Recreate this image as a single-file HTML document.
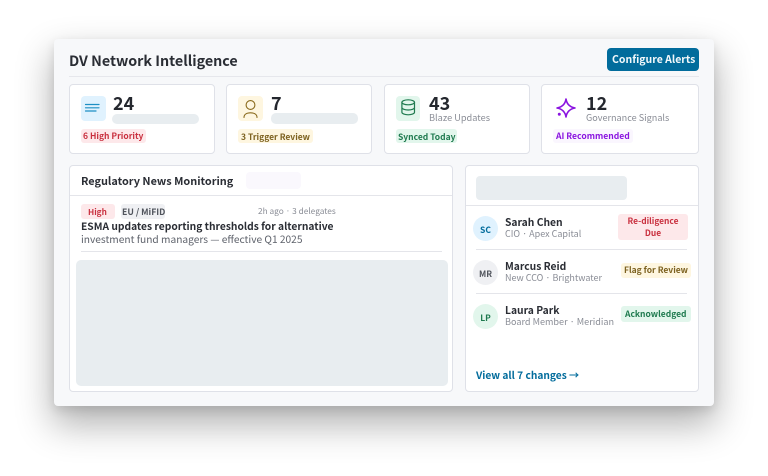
<!DOCTYPE html>
<html><head><meta charset="utf-8"><style>
html,body{margin:0;padding:0;width:768px;height:476px;background:#fff;overflow:hidden}
body{position:relative;font-family:"Noto Sans CJK JP","Liberation Sans",sans-serif;color:#24272e}
div,span.t{position:absolute;box-sizing:border-box}
.t{white-space:nowrap;line-height:1}
.card{background:#fff;border:1px solid #dfe1e8;border-radius:4px}
.ph{background:#e8edf0}
svg{position:absolute;overflow:visible}
.b{font-weight:700}
</style></head><body>
<div style="left:54px;top:39px;width:660px;height:367px;background:#f7f8fa;border-radius:4px;box-shadow:0 17px 36px 2px rgba(0,0,0,.3),0 4px 10px rgba(0,0,0,.1)"></div>
<div class="t b" style="left:69px;top:54px;font-size:14.3px;color:#2a2d34">DV Network Intelligence</div>
<div style="left:607px;top:48px;width:92px;height:23px;background:#026c9c;border-radius:4px"></div>
<div class="t b" style="left:612px;top:55px;font-size:10.5px;color:#f2f8fb">Configure Alerts</div>
<div style="left:69px;top:76px;width:630px;height:1px;background:#e6e7ec"></div>

<div class="card" style="left:69px;top:84px;width:146px;height:70px"></div>
<div class="card" style="left:226px;top:84px;width:146px;height:70px"></div>
<div class="card" style="left:384px;top:84px;width:146px;height:70px"></div>
<div class="card" style="left:541px;top:84px;width:158px;height:70px"></div>

<div style="left:81px;top:96px;width:25px;height:25px;background:#e0f2fe;border-radius:4px"></div>
<svg style="left:81px;top:96px" width="25" height="25" fill="none" stroke="#1d8fc4" stroke-width="1.2" stroke-linecap="round"><path d="M4.5 8.5H18M4.5 11.8H18M4.5 15H15"/></svg>
<div class="t b" style="left:113px;top:94px;font-size:18px">24</div>
<div class="ph" style="left:112px;top:114px;width:87px;height:10px;border-radius:5px"></div>
<div style="left:81px;top:129px;width:65px;height:14px;background:#fde8ea;border-radius:3px"></div>
<div class="t b" style="left:83px;top:132px;font-size:8.5px;color:#c9303f">6 High Priority</div>

<div style="left:238px;top:96px;width:25px;height:25px;background:#fef6e0;border-radius:4px"></div>
<svg style="left:238px;top:96px" width="25" height="25" fill="none" stroke="#8a6a1c" stroke-width="1.1" stroke-linecap="round"><circle cx="12.5" cy="9" r="4.4"/><path d="M6 21.5C6 18.5 8.5 16.8 12.5 16.8S19 18.5 19 21.5"/></svg>
<div class="t b" style="left:271px;top:94px;font-size:18px">7</div>
<div class="ph" style="left:271px;top:113px;width:87px;height:11px;border-radius:5px"></div>
<div style="left:238px;top:129px;width:75px;height:14px;background:#fef6e0;border-radius:3px"></div>
<div class="t b" style="left:241px;top:133px;font-size:8.5px;color:#7d6220">3 Trigger Review</div>

<div style="left:396px;top:96px;width:24px;height:25px;background:#e2f6ec;border-radius:4px"></div>
<svg style="left:396px;top:96px" width="24" height="25" fill="none" stroke="#1f7a4f" stroke-width="1.2"><ellipse cx="12.2" cy="6.3" rx="6.3" ry="2.5"/><path d="M5.9 6.3V16.3C5.9 17.8 9 18.8 12.2 18.8S18.5 17.8 18.5 16.3V6.3M5.9 11.5C5.9 13 9 14 12.2 14S18.5 13 18.5 11.5"/></svg>
<div class="t b" style="left:429px;top:94px;font-size:18px">43</div>
<div class="t" style="left:429px;top:113px;font-size:9.2px;color:#8a8d96">Blaze Updates</div>
<div style="left:396px;top:129px;width:61px;height:14px;background:#e2f6ec;border-radius:3px"></div>
<div class="t b" style="left:398px;top:133px;font-size:8.5px;color:#1f7a4f">Synced Today</div>

<svg style="left:555px;top:97px" width="22" height="22" fill="none" stroke="#8a14e0" stroke-width="1.6" stroke-linejoin="round"><path d="M11 2C11.8 7 14.5 10 20 11C14.5 12 11.8 15 11 20C10.2 15 7.5 12 2 11C7.5 10 10.2 7 11 2Z"/><circle cx="4.3" cy="17.2" r=".7" fill="#8a14e0"/></svg>
<div class="t b" style="left:586px;top:94px;font-size:18px">12</div>
<div class="t" style="left:586px;top:113px;font-size:9.1px;color:#8a8d96">Governance Signals</div>
<div style="left:553px;top:129px;width:80px;height:14px;background:#faf6fe;border-radius:3px"></div>
<div class="t b" style="left:556px;top:132px;font-size:8.6px;color:#8a14e0">AI Recommended</div>

<div class="card" style="left:69px;top:165px;width:384px;height:227px"></div>
<div class="t b" style="left:81px;top:176px;font-size:10.9px;color:#2a2d34">Regulatory News Monitoring</div>
<div style="left:246px;top:172px;width:55px;height:17px;background:#faf8fd;border-radius:4px"></div>
<div style="left:70px;top:195px;width:382px;height:1px;background:#e4e5ea"></div>
<div style="left:81px;top:204px;width:34px;height:15px;background:#fde8ea;border-radius:3px"></div>
<div class="t b" style="left:88px;top:208px;font-size:8.2px;color:#c9303f">High</div>
<div style="left:121px;top:204px;width:44px;height:15px;background:#eff0f3;border-radius:3px"></div>
<div class="t b" style="left:122px;top:208px;font-size:8.7px;color:#50545c">EU / MiFID</div>
<div class="t" style="left:258px;top:207px;font-size:8.3px;color:#8a8d96">2h ago · 3 delegates</div>
<div class="t b" style="left:81px;top:221px;font-size:10.25px;color:#2a2d34">ESMA updates reporting thresholds for alternative</div>
<div class="t" style="left:81px;top:234px;font-size:10.2px;color:#5e626b">investment fund managers — effective Q1 2025</div>
<div style="left:81px;top:251px;width:361px;height:1px;background:#e4e5ea"></div>
<div class="ph" style="left:76px;top:260px;width:372px;height:126px;border-radius:5px"></div>

<div class="card" style="left:465px;top:165px;width:234px;height:227px"></div>
<div class="ph" style="left:476px;top:176px;width:151px;height:24px;border-radius:4px"></div>
<div style="left:466px;top:205px;width:232px;height:1px;background:#e4e5ea"></div>

<div style="left:473px;top:216px;width:25px;height:25px;border-radius:50%;background:#e0f2fe"></div>
<div class="t b" style="left:473px;top:226px;width:25px;text-align:center;font-size:8.5px;color:#026c9c">SC</div>
<div class="t b" style="left:505px;top:217px;font-size:10.3px;color:#2a2d34">Sarah Chen</div>
<div class="t" style="left:505px;top:229px;font-size:9px;color:#8a8d96">CIO · Apex Capital</div>
<div style="left:618px;top:214px;width:70px;height:26px;background:#fde8ea;border-radius:3px"></div>
<div class="t b" style="left:618px;top:216px;width:70px;text-align:center;font-size:8.4px;line-height:11.5px;color:#c9303f">Re-diligence<br>Due</div>
<div style="left:476px;top:249px;width:211px;height:1px;background:#e4e5ea"></div>

<div style="left:473px;top:260px;width:25px;height:25px;border-radius:50%;background:#eff0f3"></div>
<div class="t b" style="left:473px;top:270px;width:25px;text-align:center;font-size:8.5px;color:#50545c">MR</div>
<div class="t b" style="left:505px;top:261px;font-size:10.3px;color:#2a2d34">Marcus Reid</div>
<div class="t" style="left:505px;top:273px;font-size:9px;color:#8a8d96">New CCO · Brightwater</div>
<div style="left:621px;top:263px;width:70px;height:15px;background:#fef6e0;border-radius:3px"></div>
<div class="t b" style="left:624px;top:266px;font-size:8.5px;color:#7d6220">Flag for Review</div>
<div style="left:476px;top:293px;width:211px;height:1px;background:#e4e5ea"></div>

<div style="left:473px;top:304px;width:25px;height:25px;border-radius:50%;background:#e2f6ec"></div>
<div class="t b" style="left:473px;top:314px;width:25px;text-align:center;font-size:8.5px;color:#1f7a4f">LP</div>
<div class="t b" style="left:505px;top:305px;font-size:10.3px;color:#2a2d34">Laura Park</div>
<div class="t" style="left:505px;top:317px;font-size:9.1px;color:#8a8d96">Board Member · Meridian</div>
<div style="left:621px;top:306px;width:70px;height:16px;background:#e2f6ec;border-radius:3px"></div>
<div class="t b" style="left:625px;top:310px;font-size:8.5px;color:#1f7a4f">Acknowledged</div>

<div class="t b" style="left:476px;top:370px;font-size:10.2px;color:#026c9c">View all 7 changes →</div>
</body></html>
